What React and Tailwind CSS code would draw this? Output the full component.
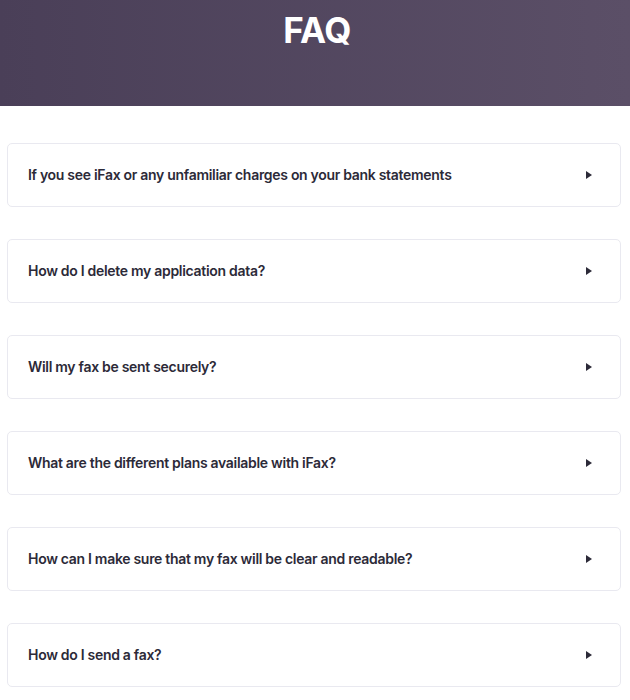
export default function App() {
  const items = [
    "If you see iFax or any unfamiliar charges on your bank statements",
    "How do I delete my application data?",
    "Will my fax be sent securely?",
    "What are the different plans available with iFax?",
    "How can I make sure that my fax will be clear and readable?",
    "How do I send a fax?",
  ];
  return (
    <div className="w-[630px] min-h-[700px] bg-white" style={{ fontFamily: "Inter, 'Noto Sans', sans-serif" }}>
      <header className="h-[106px] bg-gradient-to-r from-[#4a3f58] to-[#5b4f67] flex justify-center">
        <h1 className="text-white font-bold text-[35px] leading-none mt-[13px] ml-[4px] tracking-[-0.5px]">FAQ</h1>
      </header>
      <div className="flex flex-col gap-[32px] pt-[37px] pl-[7px] pr-[9px]">
        {items.map((q) => (
          <div key={q} className="h-[64px] border border-[#e9e9f0] rounded-[5px] flex items-center justify-between pl-[20px] pr-[28px]">
            <span className="text-[14px] leading-none font-semibold text-[#2c2a38] tracking-[-0.3px]">{q}</span>
            <svg width="6" height="8" viewBox="0 0 6 8" className="text-[#2c2a38]">
              <path d="M0 0 L6 4 L0 8 Z" fill="currentColor" />
            </svg>
          </div>
        ))}
      </div>
    </div>
  );
}
